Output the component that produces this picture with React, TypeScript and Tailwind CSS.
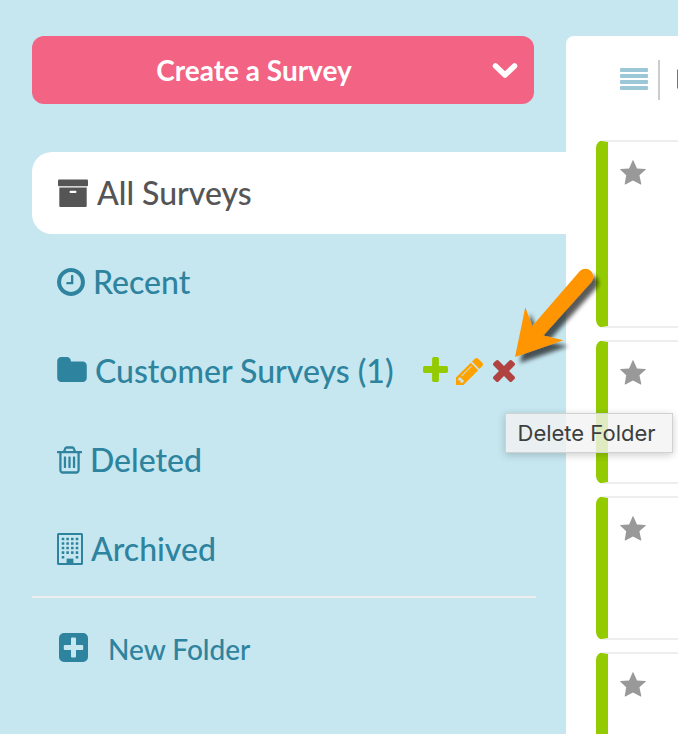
import type { ReactNode } from "react";

type IconProps = { className?: string };

const ArchiveBoxIcon = ({ className }: IconProps) => (
    <svg viewBox="-1 -1 32 30" fill="currentColor" className={className} aria-hidden="true">
        <rect x="0" y="0.5" width="30" height="6.8" rx="1" />
        <path fillRule="evenodd" d="M1.3 8.500h27.4v18.6a1 1 0 0 1-1 1H2.3a1 1 0 0 1-1-1zM12.6 11.800a1.1 1.1 0 0 0 0 2.2h4.8a1.1 1.1 0 0 0 0-2.2z" />
    </svg>
);

const ClockIcon = ({ className }: IconProps) => (
    <svg viewBox="128 128 1536 1536" fill="currentColor" className={className} aria-hidden="true">
        <path d="M1024 544v448q0 14-9 23t-23 9h-320q-14 0-23-9t-9-23v-64q0-14 9-23t23-9h224v-352q0-14 9-23t23-9h64q14 0 23 9t9 23zm416 352q0-148-73-273t-198-198-273-73-273 73-198 198-73 273 73 273 198 198 273 73 273-73 198-198 73-273zm224 0q0 209-103 385.5t-279.5 279.5-385.5 103-385.5-103-279.5-279.5-103-385.5 103-385.5 279.5-279.5 385.5-103 385.5 103 279.5 279.5 103 385.5z" />
    </svg>
);

const FolderIcon = ({ className }: IconProps) => (
    <svg viewBox="64 128 1664 1408" fill="currentColor" className={className} aria-hidden="true">
        <path d="M1728 608v704q0 92-66 158t-158 66h-1216q-92 0-158-66t-66-158v-960q0-92 66-158t158-66h320q92 0 158 66t66 158v32h672q92 0 158 66t66 158z" />
    </svg>
);

const TrashIcon = ({ className }: IconProps) => (
    <svg viewBox="192 128 1408 1536" fill="currentColor" className={className} aria-hidden="true">
        <path d="M704 736v576q0 14-9 23t-23 9h-64q-14 0-23-9t-9-23v-576q0-14 9-23t23-9h64q14 0 23 9t9 23zm256 0v576q0 14-9 23t-23 9h-64q-14 0-23-9t-9-23v-576q0-14 9-23t23-9h64q14 0 23 9t9 23zm256 0v576q0 14-9 23t-23 9h-64q-14 0-23-9t-9-23v-576q0-14 9-23t23-9h64q14 0 23 9t9 23zm128 724v-948h-896v948q0 22 7 40.5t14.5 27 10.5 8.5h832q3 0 10.5-8.5t14.5-27 7-40.5zm-672-1076h448l-48-117q-7-9-17-11h-317q-10 2-17 11zm928 32v64q0 14-9 23t-23 9h-96v948q0 83-47 143.5t-113 60.5h-832q-66 0-113-58.5t-47-141.5v-952h-96q-14 0-23-9t-9-23v-64q0-14 9-23t23-9h309l70-167q15-37 54-63t79-26h320q40 0 79 26t54 63l70 167h309q14 0 23 9t9 23z" />
    </svg>
);

const windowRows = [6, 10.5, 15, 19.6, 24.2];
const windowCols = [6, 10.6, 15.3, 20];

const BuildingIcon = ({ className }: IconProps) => (
    <svg viewBox="0 0 26 32" fill="currentColor" className={className} aria-hidden="true">
        <rect x="1" y="1" width="24" height="30" rx="0.6" fill="none" stroke="currentColor" strokeWidth="2" />
        {windowRows.map((y, row) =>
            windowCols
                .filter((_, col) => row < 4 || col === 0 || col === 3)
                .map((x) => <rect key={`${x}-${y}`} x={x - 1.3} y={y - 1.3} width="2.6" height="2.6" rx="0.3" />)
        )}
        <rect x="9.6" y="25.6" width="6.8" height="5.4" />
    </svg>
);

const PlusIcon = ({ className }: IconProps) => (
    <svg viewBox="192 128 1408 1408" fill="currentColor" className={className} aria-hidden="true">
        <path d="M1600 736v192q0 40-28 68t-68 28h-416v416q0 40-28 68t-68 28h-192q-40 0-68-28t-28-68v-416h-416q-40 0-68-28t-28-68v-192q0-40 28-68t68-28h416v-416q0-40 28-68t68-28h192q40 0 68 28t28 68v416h416q40 0 68 28t28 68z" />
    </svg>
);

const PencilIcon = ({ className }: IconProps) => (
    <svg viewBox="128 149 1515 1515" fill="currentColor" className={className} aria-hidden="true">
        <path d="M491 1536l91-91-235-235-91 91v107h128v128h107zm523-928q0-22-22-22-10 0-17 7l-542 542q-7 7-7 17 0 22 22 22 10 0 17-7l542-542q7-7 7-17zm-54-192l416 416-832 832h-416v-416zm683 96q0 53-37 90l-166 166-416-416 166-165q36-38 90-38 53 0 91 38l235 234q37 39 37 91z" />
    </svg>
);

const CloseIcon = ({ className }: IconProps) => (
    <svg viewBox="302 366 1188 1188" fill="currentColor" className={className} aria-hidden="true">
        <path d="M1490 1322q0 40-28 68l-136 136q-28 28-68 28t-68-28l-294-294-294 294q-28 28-68 28t-68-28l-136-136q-28-28-28-68t28-68l294-294-294-294q-28-28-28-68t28-68l136-136q28-28 68-28t68 28l294 294 294-294q28-28 68-28t68 28l136 136q28 28 28 68t-28 68l-294 294 294 294q28 28 28 68z" />
    </svg>
);

const PlusSquareIcon = ({ className }: IconProps) => (
    <svg viewBox="0 0 29 29" fill="currentColor" className={className} aria-hidden="true">
        <path fillRule="evenodd" d="M5 0h19a5 5 0 0 1 5 5v19a5 5 0 0 1-5 5H5a5 5 0 0 1-5-5V5a5 5 0 0 1 5-5zM13 4.6a1 1 0 0 0-1 1V12H5.8a1 1 0 0 0-1 1v3a1 1 0 0 0 1 1H12v6.4a1 1 0 0 0 1 1h3a1 1 0 0 0 1-1V17h6.2a1 1 0 0 0 1-1v-3a1 1 0 0 0-1-1H17V5.6a1 1 0 0 0-1-1z" />
    </svg>
);

const StarIcon = ({ className }: IconProps) => (
    <svg viewBox="0 0 26 25" fill="currentColor" className={className} aria-hidden="true">
        <path d="M12.6.5q.4-.8.8 0l3.6 7.9 8.4.6q.9.1.2.8l-6.2 5.5 1.9 8.6q.1 1-.7.5L13 20.500l-7.6 3.9q-.8.5-.7-.5l1.500-8.600L.4 9.800q-.7-.7.2-.8l8.500-.6z" />
    </svg>
);

const Arrow = ({ className }: IconProps) => (
    <svg viewBox="505 257 106 120" className={className} aria-hidden="true">
        <defs>
            <filter id="arrowShadow" x="-20%" y="-20%" width="150%" height="150%">
                <feDropShadow dx="5" dy="6" stdDeviation="2" floodColor="#000" floodOpacity="0.65" />
            </filter>
        </defs>
        <path
            d="M515 357l10.300-49.700 7 18.700 47.800-55.200a8 8 0 0 1 11.700 10.800L543.300 335.400l20 4.800z"
            fill="#ff9502"
            filter="url(#arrowShadow)"
        />
    </svg>
);

const NavItem = ({ icon, label, active, children }: { icon: ReactNode; label: string; active?: boolean; children?: ReactNode }) => (
    <li
        className={`flex h-[82px] items-center pl-[25px] ${active
            ? "rounded-l-[20px] bg-white text-[#555555]"
            : "text-[#2e839e]"}`}
    >
        <a href="#" className="flex items-center gap-2">
            {icon}
            <span>{label}</span>
        </a>
        {children}
    </li>
);

const cards = [
    { id: 1, height: "h-[188px]" },
    { id: 2, height: "h-[144px]" },
    { id: 3, height: "h-[144px]" },
    { id: 4, height: "h-[144px]" },
];

export default function App() {
    return (
        <div className="flex h-screen overflow-hidden bg-[#c6e7f0] pt-9 font-['Lato',sans-serif]">
            {/* Sidebar */}
            <aside className="relative z-10 w-[566px] shrink-0 pl-8">
                <button
                    type="button"
                    className="flex h-[68px] w-[502px] items-center rounded-xl bg-[#f36384] px-4 text-[28px] font-bold text-white"
                >
                    <span className="flex-1 pr-8">Create a Survey</span>
                    <svg viewBox="0 0 26 18" className="h-[18px] w-[26px]" fill="none" stroke="currentColor" strokeWidth="5.500" strokeLinecap="round" strokeLinejoin="round" aria-hidden="true">
                        <path d="M3.500 5l9.500 9 9.500-9" />
                    </svg>
                </button>

                <nav className="mt-12">
                    <ul className="space-y-[7px] text-[32px] font-medium">
                        <NavItem icon={<ArchiveBoxIcon className="h-[30px] w-8" />} label="All Surveys" active />
                        <NavItem icon={<ClockIcon className="size-7" />} label="Recent" />
                        <NavItem icon={<FolderIcon className="mb-1 h-[25px] w-[30px]" />} label="Customer Surveys (1)">
                            <div className="ml-[29px] flex items-center">
                                <button type="button" aria-label="Add folder" className="mb-1 text-[#94cb00]">
                                    <PlusIcon className="size-[25px]" />
                                </button>
                                <button type="button" aria-label="Rename folder" className="ml-2 text-[#fda200]">
                                    <PencilIcon className="size-[27px]" />
                                </button>
                                <div className="relative ml-[10px] flex">
                                    <button type="button" aria-label="Delete folder" className="text-[#b04340]">
                                        <CloseIcon className="size-[22px]" />
                                    </button>
                                    <Arrow className="pointer-events-none absolute bottom-[5px] left-3 h-[120px] w-[106px]" />
                                    <div
                                        role="tooltip"
                                        className="absolute top-[53px] left-3 flex h-10 items-center border border-[#cfd2d3] bg-[#f3f3f3]/80 pr-4 pl-3 font-['Inter',sans-serif] text-[22px] font-normal whitespace-nowrap text-[#3c3f40] shadow-[0_2px_8px_rgba(0,0,0,0.2)]"
                                    >
                                        Delete Folder
                                    </div>
                                </div>
                            </div>
                        </NavItem>
                        <NavItem icon={<TrashIcon className="h-7 w-[25px]" />} label="Deleted" />
                        <NavItem icon={<BuildingIcon className="h-8 w-[26px]" />} label="Archived" />
                    </ul>
                </nav>

                <hr className="mt-[6px] w-[504px] border-t-2 border-[#eeeeee]" />

                <button type="button" className="mt-[30px] ml-[27px] flex items-center gap-5 text-[28px] font-medium text-[#2e839e]">
                    <PlusSquareIcon className="mb-1 size-[29px]" />
                    New Folder
                </button>
            </aside>

            {/* Survey list */}
            <main className="min-w-0 flex-1 overflow-hidden rounded-tl-lg bg-white pl-[30px]">
                <div className="flex h-[104px] items-start gap-[10px] pt-6 pl-6">
                    <button type="button" aria-label="List view" className="mt-2 flex shrink-0 flex-col gap-[2px]">
                        {[0, 1, 2, 3].map((i) => (
                            <span key={i} className="block h-1 w-7 rounded-[1px] bg-[#9cc7d7]" />
                        ))}
                    </button>
                    <span className="h-10 w-[2px] shrink-0 bg-[#cccccc]" />
                    <button type="button" aria-label="Grid view" className="mt-[9px] ml-[7px] shrink-0 text-[#3a8aa3]">
                        <svg viewBox="0 0 28 20" className="h-5 w-7" fill="currentColor" aria-hidden="true">
                            <path d="M1 0h11v9H0V1zM16 0h11l1 1v8H16zM0 11h12v9H1l-1-1zM16 11h12v8l-1 1H16z" />
                            <rect x="0" y="1" width="4" height="18" />
                        </svg>
                    </button>
                </div>
                <div className="space-y-3">
                    {cards.map((card) => (
                        <article
                            key={card.id}
                            className={`rounded-l-lg border-y-2 border-l-[12px] border-y-[#eeeeee] border-l-[#94cb00] pt-[18px] pl-3 ${card.height}`}
                        >
                            <button type="button" aria-label="Favorite survey" className="block text-[#999999]">
                                <StarIcon className="h-[25px] w-[26px]" />
                            </button>
                        </article>
                    ))}
                </div>
            </main>
        </div>
    );
}
